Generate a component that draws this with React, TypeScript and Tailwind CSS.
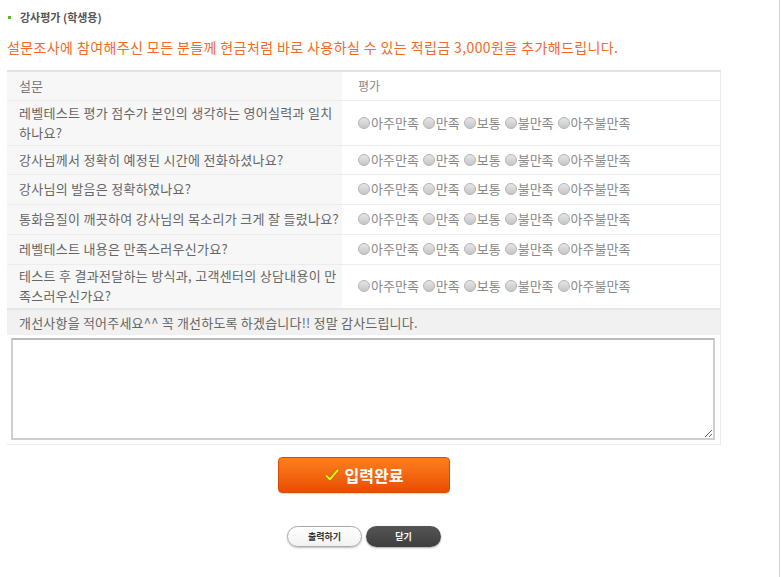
import React from "react";

const questions = [
  ["레벨테스트 평가 점수가 본인의 생각하는 영어실력과 일치", "하나요?"],
  ["강사님께서 정확히 예정된 시간에 전화하셨나요?"],
  ["강사님의 발음은 정확하였나요?"],
  ["통화음질이 깨끗하여 강사님의 목소리가 크게 잘 들렸나요?"],
  ["레벨테스트 내용은 만족스러우신가요?"],
  ["테스트 후 결과전달하는 방식과, 고객센터의 상담내용이 만", "족스러우신가요?"],
];

const options = ["아주만족", "만족", "보통", "불만족", "아주불만족"];

const Radio = () => (
  <span className="inline-block w-[12px] h-[12px] rounded-full border border-[#b5b5b5] bg-gradient-to-b from-[#e6e6e6] to-[#c6c6c6] mr-[1px] align-[-1px]" />
);

const App = () => {
  return (
    <div
      className="flex w-[782px] h-[577px] bg-white"
      style={{ fontFamily: '"Noto Sans CJK KR", "Noto Sans", sans-serif' }}
    >
      <div className="w-[780px] h-full border-r border-[#f6c6dc] pl-[7px] pt-[9px]">
        {/* 제목 */}
        <div className="flex items-center h-[16px]">
          <span className="w-[3px] h-[3px] bg-[#5cb531] ml-[1px] mr-[9px]" />
          <span className="text-[11px] font-bold text-[#555] leading-none">강사평가 (학생용)</span>
        </div>
        <p className="mt-[12px] text-[14px] tracking-[0.4px] text-[#f26a28] leading-[20px] whitespace-nowrap">
          설문조사에 참여해주신 모든 분들께 현금처럼 바로 사용하실 수 있는 적립금 3,000원을 추가해드립니다.
        </p>

        {/* 설문 테이블 */}
        <div className="mt-[13px] w-[714px] border-t-[2px] border-[#e2e2e2] border-r border-r-[#ececec] border-b border-b-[#ececec]">
          <table className="w-full border-collapse text-[13px] leading-[20px]">
            <tbody>
              <tr className="h-[28px]">
                <td className="w-[335px] bg-[#f7f7f7] pl-[12px] text-[#777]">설문</td>
                <td className="pl-[16px] text-[#888] text-[12px]">평가</td>
              </tr>
              {questions.map((q, i) => (
                <tr
                  key={i}
                  className={`border-t border-[#ececec] ${q.length > 1 ? "h-[45px]" : i === 1 ? "h-[29px]" : "h-[30px]"}`}
                >
                  <td className="bg-[#f7f7f7] pl-[12px] text-[#666] tracking-[0.3px] whitespace-nowrap">
                    {q[0]}
                    {q[1] && (
                      <>
                        <br />
                        {q[1]}
                      </>
                    )}
                  </td>
                  <td className="pl-[16px] text-[13px] text-[#888] whitespace-nowrap">
                    {options.map((o) => (
                      <span key={o} className="mr-[4px]">
                        <Radio />
                        {o}
                      </span>
                    ))}
                  </td>
                </tr>
              ))}
              <tr className="h-[26px] border-t-[2px] border-[#e6e6e6]">
                <td colSpan={2} className="bg-[#f1f1f1] pl-[12px] text-[#666] tracking-[0.2px] whitespace-nowrap">
                  개선사항을 적어주세요^^ 꼭 개선하도록 하겠습니다!! 정말 감사드립니다.
                </td>
              </tr>
              <tr>
                <td colSpan={2} className="px-[4px] pt-[3px] pb-[4px]">
                  <textarea className="block w-[704px] h-[102px] border-[2px] border-[#cfcfcf] border-t-[#bcbcbc] bg-white" />
                </td>
              </tr>
            </tbody>
          </table>
        </div>

        {/* 버튼 */}
        <div className="flex justify-center w-[714px] mt-[12px]">
          <button className="flex items-center justify-center gap-[6px] w-[172px] h-[36px] rounded-[4px] border border-[#d94c00] bg-gradient-to-b from-[#ff7f1e] to-[#e84d00] text-white text-[16px] font-bold shadow-[0_1px_1px_rgba(0,0,0,0.15)]">
            <svg width="14" height="12" viewBox="0 0 16 14">
              <path
                d="M1.5 8 L5.5 12 L14.5 1.5"
                fill="none"
                stroke="#7a8a00"
                strokeWidth="3.4"
                strokeLinecap="round"
                strokeLinejoin="round"
              />
              <path
                d="M1.5 8 L5.5 12 L14.5 1.5"
                fill="none"
                stroke="#ffe61a"
                strokeWidth="2.2"
                strokeLinecap="round"
                strokeLinejoin="round"
              />
            </svg>
            입력완료
          </button>
        </div>
        <div className="flex justify-center gap-[4px] w-[714px] mt-[33px]">
          <button className="w-[75px] h-[21px] rounded-full border border-[#a9a9a9] bg-gradient-to-b from-white to-[#f2f2f2] text-[9px] font-bold text-[#333] shadow-[0_1px_2px_rgba(0,0,0,0.25)]">
            출력하기
          </button>
          <button className="w-[75px] h-[21px] rounded-full bg-gradient-to-b from-[#555] to-[#3e3e3e] text-[9px] font-bold text-white shadow-[0_1px_2px_rgba(0,0,0,0.35)]">
            닫기
          </button>
        </div>
      </div>
    </div>
  );
};

export default App;
